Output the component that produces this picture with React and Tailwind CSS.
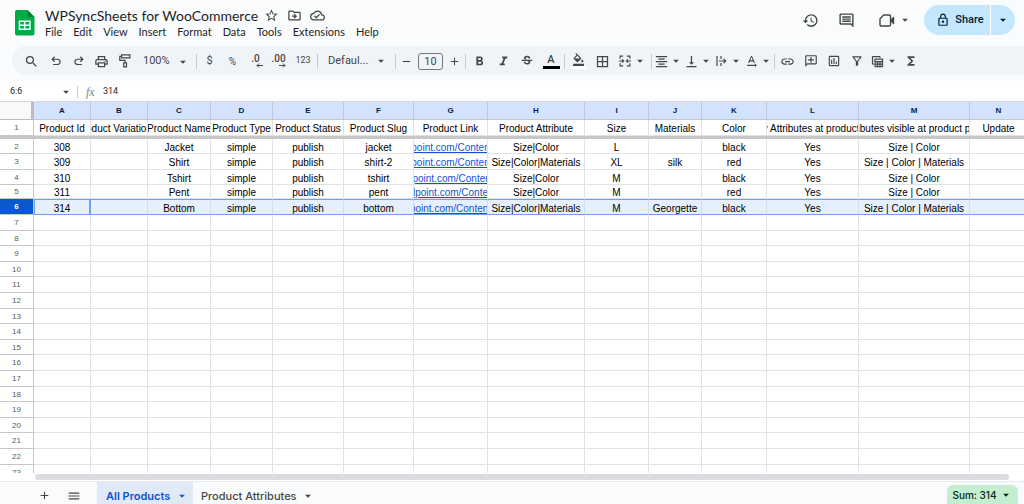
import React, { useState } from "react";
import {
  MdAdd,
  MdArrowDropDown,
  MdBorderAll,
  MdFormatAlignCenter,
  MdFormatBold,
  MdFormatColorFill,
  MdFormatItalic,
  MdFunctions,
  MdHistory,
  MdLink,
  MdMenu,
  MdOutlineAddComment,
  MdOutlineCloudDone,
  MdOutlineComment,
  MdOutlineDriveFileMove,
  MdOutlineFilterAlt,
  MdOutlineInsertChartOutlined,
  MdOutlineLock,
  MdOutlinePrint,
  MdOutlineTableView,
  MdRemove,
  MdSearch,
  MdStarBorder,
  MdStrikethroughS,
  MdTextRotationNone,
  MdVerticalAlignBottom,
} from "react-icons/md";

const MENUS = ["File", "Edit", "View", "Insert", "Format", "Data", "Tools", "Extensions", "Help"];

const COLUMNS = [
  { id: "A", width: 57, title: "Product Id" },
  { id: "B", width: 57, title: "oduct Variation" },
  { id: "C", width: 63, title: "Product Name" },
  { id: "D", width: 62, title: "Product Type" },
  { id: "E", width: 71, title: "Product Status" },
  { id: "F", width: 70, title: "Product Slug" },
  { id: "G", width: 74, title: "Product Link", link: true },
  { id: "H", width: 97, title: "Product Attribute" },
  { id: "I", width: 64, title: "Size" },
  { id: "J", width: 53, title: "Materials" },
  { id: "K", width: 65, title: "Color" },
  { id: "L", width: 92, title: "y Attributes at product\u00a0" },
  { id: "M", width: 111, title: "ibutes visible at product p" },
  { id: "N", width: 58, title: "Update" },
];

const PRODUCTS = [
  { row: 2, height: 15, cells: ["308", "", "Jacket", "simple", "publish", "jacket", "point.com/Conten", "Size|Color", "L", "", "black", "Yes", "Size | Color", ""] },
  { row: 3, height: 16, cells: ["309", "", "Shirt", "simple", "publish", "shirt-2", "point.com/Conten", "Size|Color|Materials", "XL", "silk", "red", "Yes", "Size | Color | Materials", ""] },
  { row: 4, height: 15, cells: ["310", "", "Tshirt", "simple", "publish", "tshirt", "lpoint.com/Conten", "Size|Color", "M", "", "black", "Yes", "Size | Color", ""] },
  { row: 5, height: 14, cells: ["311", "", "Pent", "simple", "publish", "pent", "lpoint.com/Conte", "Size|Color", "M", "", "red", "Yes", "Size | Color", ""] },
  { row: 6, height: 16, cells: ["314", "", "Bottom", "simple", "publish", "bottom", "point.com/Content", "Size|Color|Materials", "M", "Georgette", "black", "Yes", "Size | Color | Materials", ""] },
];

const EMPTY_HEIGHTS = [16, 15, 16, 15, 16];
const EMPTY_ROWS = Array.from({ length: 17 }, (_, i) => ({
  row: i + 7,
  height: EMPTY_HEIGHTS[i % 5],
  cells: COLUMNS.map(() => ""),
}));

/* ---------- icons ---------- */

const SheetsLogo = () => (
  <svg width="20" height="26" viewBox="0 0 20 26" aria-hidden="true">
    <path d="M2 0h10.500l7 7v16.500a2 2 0 0 1-2 2H2a2 2 0 0 1-2-2V2a2 2 0 0 1 2-2z" fill="#00ac47" />
    <path d="M12.500 0l7 7h-5.200a1.800 1.800 0 0 1-1.800-1.800z" fill="#00832d" />
    <path d="M3.700 10.500h12v9.500h-12zM5.200 12v2.500h3.700V12zm5.200 0v2.500h3.800V12zM5.200 16v2.500h3.700V16zm5.200 0v2.500h3.800V16z" fill="#fff" fillRule="evenodd" />
  </svg>
);

const UndoIcon = ({ flip }) => (
  <svg width="14" height="14" viewBox="0 -960 960 960" fill="currentColor" className={flip ? "-scale-x-100" : ""}>
    <path d="M280-200v-80h284q63 0 109.500-40T720-420q0-60-46.500-100T564-560H312l104 104-56 56-200-200 200-200 56 56-104 104h252q97 0 169.500 63T800-420q0 94-72.500 157T564-200H280Z" />
  </svg>
);

const RollerIcon = () => (
  <svg width="12" height="14" viewBox="0 0 12 14" fill="none" stroke="currentColor" strokeWidth="1.200">
    <path d="M2.600.9h8.300v3H2.600zM2.600 2.300H.8v4h5.300v2.500M4.700 8.800h2.800v4H4.700z" />
  </svg>
);

const MergeIcon = () => (
  <svg width="12" height="12" viewBox="0 0 13 13" fill="none" stroke="currentColor" strokeWidth="1.200">
    <path d="M4.500 1.200H1.200V4M8.500 1.200h3.300V4M4.500 11.800H1.200V9M8.500 11.800h3.300V9M0 6.500h4.800M13 6.500H8.200M3.300 4.700l1.800 1.800-1.800 1.800M9.700 4.700L7.900 6.500l1.800 1.800" />
  </svg>
);

const OverflowIcon = () => (
  <svg width="11" height="12" viewBox="0 0 11 12" fill="none" stroke="currentColor" strokeWidth="1.200">
    <path d="M1 1v10M5 1v3M5 8v3M3 6h6.500M7.500 3.800L9.700 6 7.500 8.200" />
  </svg>
);

const CameraIcon = () => (
  <svg width="16" height="13" viewBox="0 0 16 13" fill="none" stroke="currentColor" strokeWidth="1.400">
    <path d="M4.700 1h5.600q1.200 0 1.200 1.200v8.600q0 1.200-1.200 1.200H2.200Q1 12 1 10.800V4.700z" strokeLinejoin="round" />
    <path d="M12 5l2.600-2.200h.6v7.400h-.6L12 8z" fill="currentColor" stroke="none" />
  </svg>
);

const DecimalIcon = ({ digits, increase }) => (
  <span className="flex flex-col items-center font-medium text-[10px] leading-[9px]">
    {digits}
    <svg width="7" height="5" viewBox="0 0 7 5" fill="none" stroke="currentColor" className={increase ? "ml-2" : "ml-2 -scale-x-100"}>
      <path d="M0 2.500h6M4 .500l2 2-2 2" />
    </svg>
  </span>
);

/* ---------- toolbar pieces ---------- */

const Caret = () => <MdArrowDropDown size={14} className="shrink-0" />;

const Divider = () => <span className="w-px h-[15px] mx-px shrink-0 bg-[#c7cbd1]" />;

const Tool = ({ label, width = "w-6", children }) => (
  <button aria-label={label} className={`${width} h-5 shrink-0 flex items-center justify-center`}>
    {children}
  </button>
);

const SplitTool = ({ label, width = "w-[30px]", children }) => (
  <button aria-label={label} className={`${width} h-5 shrink-0 flex items-center justify-center`}>
    <span className="w-[15px] flex justify-center">{children}</span>
    <Caret />
  </button>
);

function Header() {
  return (
    <header className="h-[46px] shrink-0 flex items-start justify-between pl-[15px] pr-[9px]">
      <div className="flex gap-[10px] font-[Lato,sans-serif]">
        <div className="pt-[10px]">
          <SheetsLogo />
        </div>
        <div className="pt-[7px]">
          <div className="flex items-center text-[#444746]">
            <h1 className="text-[14px] leading-[17px] text-[#1f1f1f] mr-[6px]">WPSyncSheets for WooCommerce</h1>
            <div className="flex gap-2">
              <button aria-label="Star"><MdStarBorder size={15} /></button>
              <button aria-label="Move"><MdOutlineDriveFileMove size={15} /></button>
              <button aria-label="See document status"><MdOutlineCloudDone size={15} /></button>
            </div>
          </div>
          <nav className="flex gap-[11px] text-[11px] leading-[16px] text-[#1f1f1f]">
            {MENUS.map((menu) => (
              <button key={menu}>{menu}</button>
            ))}
          </nav>
        </div>
      </div>
      <div className="flex items-center pt-[5px] text-[#444746]">
        <button aria-label="Version history" className="mr-[19px]"><MdHistory size={17} /></button>
        <button aria-label="Comments" className="mr-6"><MdOutlineComment size={17} /></button>
        <button aria-label="Join a call" className="flex items-center gap-[3px] mr-3">
          <CameraIcon />
          <Caret />
        </button>
        <div className="flex h-[30px] rounded-full overflow-hidden bg-[#c2e7ff] text-[#001d35]">
          <button className="w-[66px] pl-[6px] flex items-center justify-center gap-[5px] text-[11px] font-medium">
            <MdOutlineLock size={14} />
            Share
          </button>
          <button aria-label="Share options" className="w-[25px] border-l border-white flex items-center justify-center">
            <Caret />
          </button>
        </div>
      </div>
    </header>
  );
}

function Toolbar() {
  return (
    <div role="toolbar" className="h-[29px] shrink-0 ml-3 pl-[6px] pt-px rounded-l-full bg-[#f0f4f9] flex items-center text-[#444746] text-[11px]">
      <Tool label="Search" width="w-[26px]"><MdSearch size={15} /></Tool>
      <Tool label="Undo" width="w-[23px]"><UndoIcon /></Tool>
      <Tool label="Redo" width="w-[23px]"><UndoIcon flip /></Tool>
      <Tool label="Print" width="w-[23px]"><MdOutlinePrint size={15} /></Tool>
      <Tool label="Paint format" width="w-[23px]"><RollerIcon /></Tool>
      <button className="w-[59px] shrink-0 flex items-center justify-between pl-[7px] pr-[5px] pt-px">
        100%
        <Caret />
      </button>
      <Divider />
      <Tool label="Currency" width="w-[23px]">$</Tool>
      <Tool label="Percent" width="w-[23px]"><span className="text-[10px]">%</span></Tool>
      <Tool label="Decrease decimal places" width="w-[23px]"><DecimalIcon digits=".0" /></Tool>
      <Tool label="Increase decimal places" width="w-[23px]"><DecimalIcon digits=".00" increase /></Tool>
      <Tool label="More formats" width="w-[26px]"><span className="text-[9px]">123</span></Tool>
      <Divider />
      <button className="w-[75px] shrink-0 flex items-center justify-between pl-[9px] pr-[6px]">
        Defaul...
        <Caret />
      </button>
      <Divider />
      <Tool label="Decrease font size" width="w-[19px]"><MdRemove size={13} /></Tool>
      <input
        aria-label="Font size"
        defaultValue="10"
        className="w-[25px] h-[17px] mx-[2px] shrink-0 rounded-[3px] border border-[#747775] text-center text-[11px] bg-transparent"
      />
      <Tool label="Increase font size" width="w-[19px]"><MdAdd size={13} /></Tool>
      <Divider />
      <Tool label="Bold"><MdFormatBold size={15} /></Tool>
      <Tool label="Italic"><MdFormatItalic size={15} /></Tool>
      <Tool label="Strikethrough"><MdStrikethroughS size={14} /></Tool>
      <Tool label="Text color">
        <span className="w-[17px] border-b-[3px] border-black text-center font-medium leading-[12px]">A</span>
      </Tool>
      <Divider />
      <Tool label="Fill color">
        <span className="w-[17px] border-b-[3px] border-white flex justify-center"><MdFormatColorFill size={13} /></span>
      </Tool>
      <Tool label="Borders"><MdBorderAll size={15} /></Tool>
      <SplitTool label="Merge cells" width="w-[36px]"><MergeIcon /></SplitTool>
      <Divider />
      <SplitTool label="Horizontal align"><MdFormatAlignCenter size={15} /></SplitTool>
      <SplitTool label="Vertical align"><MdVerticalAlignBottom size={15} /></SplitTool>
      <SplitTool label="Text wrapping"><OverflowIcon /></SplitTool>
      <SplitTool label="Text rotation"><MdTextRotationNone size={15} /></SplitTool>
      <Divider />
      <Tool label="Insert link" width="w-[23px]"><MdLink size={15} /></Tool>
      <Tool label="Insert comment" width="w-[23px]"><MdOutlineAddComment size={14} className="-scale-x-100" /></Tool>
      <Tool label="Insert chart" width="w-[23px]"><MdOutlineInsertChartOutlined size={14} /></Tool>
      <Tool label="Create a filter" width="w-[23px]"><MdOutlineFilterAlt size={14} /></Tool>
      <SplitTool label="Table views" width="w-[32px]"><MdOutlineTableView size={15} /></SplitTool>
      <Tool label="Functions" width="w-[21px]"><MdFunctions size={14} /></Tool>
    </div>
  );
}

function FormulaBar() {
  const [formula, setFormula] = useState("314");

  return (
    <div className="h-[21px] mt-[6px] pt-px shrink-0 bg-white border-b border-[#d5d7da] flex items-center text-[#1f1f1f]">
      <input aria-label="Name box" defaultValue="6:6" className="w-[49px] ml-[10px] shrink-0 text-[9px]" />
      <button aria-label="Named ranges" className="text-[#444746] mr-1"><Caret /></button>
      <span className="w-px h-3 bg-[#c7c7c7] mr-2" />
      <label htmlFor="formula" className="w-[17px] font-['Liberation_Serif',serif] italic text-[12px] leading-4 text-[#80868b]">fx</label>
      <input
        id="formula"
        value={formula}
        onChange={(e) => setFormula(e.target.value)}
        className="grow min-w-0 text-[9px]"
      />
    </div>
  );
}

/* ---------- grid ---------- */

const Cell = ({ children, className = "" }) => (
  <td className={`p-0 border-r border-b border-[#e1e3e1] ${className}`}>
    <div className="flex justify-center overflow-x-clip whitespace-nowrap pt-[3px] leading-[10px]">{children}</div>
  </td>
);

const RowNumber = ({ row, selected }) => (
  <th
    scope="row"
    className={`p-0 border-r border-b border-[#c7c7c7] text-center text-[8px] leading-[13px] ${
      selected ? "bg-[#0b57d0] text-white font-bold" : "bg-white text-[#575b5f] font-normal"
    }`}
  >
    {row}
  </th>
);

function Row({ row, height, cells, selected }) {
  return (
    <tr style={{ height }}>
      <RowNumber row={row} selected={selected} />
      {cells.map((value, i) => (
        <Cell
          key={COLUMNS[i].id}
          className={
            selected
              ? `bg-[#e6effd] border-t border-t-[#6fa1ee] border-b-[#6fa1ee] ${i === 0 ? "border-l border-r-2 border-x-[#6fa1ee]" : "border-r-[#d3dcec]"}`
              : ""
          }
        >
          {COLUMNS[i].link ? (
            <a href="#link" className="text-[#1155cc] underline">{value}</a>
          ) : (
            value
          )}
        </Cell>
      ))}
    </tr>
  );
}

function Sheet() {
  return (
    <main className="grow min-h-0 overflow-hidden bg-white">
      <table className="table-fixed w-[1028px] min-w-full border-separate border-spacing-0 font-['Liberation_Sans',Arial,sans-serif] text-[10px] text-black">
        <colgroup>
          <col style={{ width: 34 }} />
          {COLUMNS.map((col) => (
            <col key={col.id} style={{ width: col.width }} />
          ))}
        </colgroup>
        <thead>
          <tr className="h-[18px]">
            <td className="p-0 bg-[#f8f9fa] border-r-[3px] border-b border-[#bdbdbd]" />
            {COLUMNS.map((col) => (
              <th key={col.id} scope="col" className="p-0 bg-[#d3e3fd] border-r border-b border-[#bfc8d6] text-[8px] leading-[13px] font-bold text-[#041e49]">
                {col.id}
              </th>
            ))}
          </tr>
        </thead>
        <tbody>
          <tr className="h-4">
            <RowNumber row={1} />
            {COLUMNS.map((col) => (
              <Cell key={col.id}>{col.title}</Cell>
            ))}
          </tr>
          <tr className="h-[3px]">
            <td colSpan={15} className="p-0 bg-[#c7c7c7]" />
          </tr>
          {PRODUCTS.map((product) => (
            <Row key={product.row} {...product} selected={product.row === 6} />
          ))}
          {EMPTY_ROWS.map((item) => (
            <Row key={item.row} {...item} />
          ))}
        </tbody>
      </table>
    </main>
  );
}

function SheetTabs() {
  return (
    <footer className="h-[23px] shrink-0 border-t border-[#e8eaed] flex items-start font-[Inter,sans-serif] text-[11px] leading-[14px] font-medium text-[#444746]">
      <button aria-label="Add sheet" className="ml-[38px] mt-[7px]"><MdAdd size={13} /></button>
      <button aria-label="All sheets" className="ml-4 mt-[7px]"><MdMenu size={14} /></button>
      <button className="h-full ml-4 w-24 pl-[9px] pr-1 flex items-center justify-between pt-[6px] bg-[#e1e9f7] text-[#0b57d0] font-semibold">
        All Products
        <Caret />
      </button>
      <button className="h-full ml-2 flex items-center gap-1 pt-[6px]">
        Product Attributes
        <Caret />
      </button>
      <button className="h-5 mt-[3px] ml-auto mr-[6px] w-[71px] flex items-center justify-center gap-[2px] rounded-t-md bg-[#c4eed0] text-[#072711] text-[10px]">
        Sum: 314
        <Caret />
      </button>
    </footer>
  );
}

export default function App() {
  return (
    <div className="h-screen overflow-hidden flex flex-col bg-[#f9fbfd] font-[Roboto,sans-serif]">
      <Header />
      <Toolbar />
      <FormulaBar />
      <Sheet />
      <div className="h-2 shrink-0 pt-px pl-[35px] pr-[15px] bg-white">
        <div className="h-[6px] rounded-full bg-[#dadce0]" />
      </div>
      <SheetTabs />
    </div>
  );
}
